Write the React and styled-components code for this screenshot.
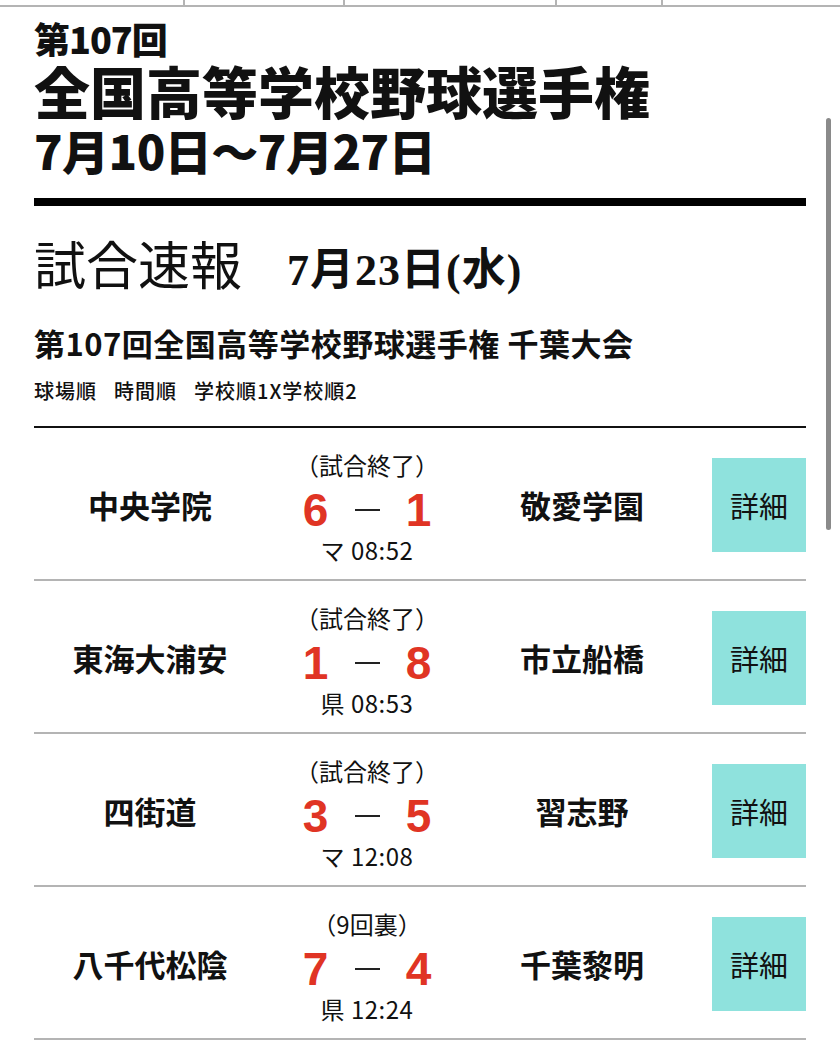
import styled, { createGlobalStyle } from 'styled-components';

const GlobalStyle = createGlobalStyle`
  html, body {
    margin: 0;
    padding: 0;
    background: #fff;
  }
  body {
    font-family: "Noto Sans CJK JP", "Noto Sans", sans-serif;
    color: #111;
    overflow: hidden;
  }
`;

// 上に少しだけ見えている表の下端
const TopStrip = styled.div`
  display: flex;
  height: 5px;
  border-bottom: 2px solid #b4b4b4;
`;

const TopCell = styled.div`
  width: ${(p) => p.w}px;
  flex: ${(p) => (p.grow ? 1 : 'none')};
  border-right: ${(p) => (p.grow ? 'none' : '2px solid #b4b4b4')};
`;

const Page = styled.div`
  padding: 0 34px;
`;

const Kai = styled.div`
  margin-top: 13px;
  font-size: 36px;
  line-height: 36px;
  font-weight: 900;
  letter-spacing: -1px;
`;

const Title = styled.h1`
  margin: 6px 0 0;
  font-size: 56px;
  line-height: 56px;
  font-weight: 900;
`;

const Period = styled.div`
  margin-top: 8px;
  font-size: 47px;
  line-height: 48px;
  font-weight: 900;
  letter-spacing: -0.5px;
`;

const Bar = styled.div`
  margin-top: 24px;
  height: 8px;
  background: #000;
`;

const Heading = styled.h2`
  margin: 34px 0 0;
  display: flex;
  align-items: baseline;
  gap: 45px;
  font-family: "Liberation Serif", "Noto Sans CJK JP", serif;
  font-weight: 400;
  font-size: 52px;
  line-height: 56px;
`;

const HeadDate = styled.span`
  font-size: 44px;
  font-weight: 700;
  letter-spacing: 1px;
`;

const Tournament = styled.div`
  margin-top: 26px;
  font-size: 31px;
  line-height: 36px;
  font-weight: 700;
  letter-spacing: 0.5px;
`;

const SortBar = styled.div`
  margin-top: 18px;
  display: flex;
  gap: 17px;
  font-size: 20px;
  line-height: 24px;
  font-weight: 500;
  letter-spacing: 1px;
`;

const SortLink = styled.span`
  color: #111;
`;

const Rule = styled.div`
  margin-top: 23px;
  height: 2px;
  background: #111;
`;

const GameRow = styled.div`
  display: grid;
  grid-template-columns: 232px 202px 228px 1fr 94px;
  align-items: center;
  padding: 30px 0 27px;
  border-bottom: 2px solid #b4b4b4;
`;

const Team = styled.div`
  text-align: center;
  font-size: 31px;
  font-weight: 700;
  line-height: 40px;
`;

const Center = styled.div`
  height: 94px;
  padding-top: 5px;
  box-sizing: border-box;
  display: flex;
  flex-direction: column;
  align-items: center;
  justify-content: center;
`;

const Status = styled.div`
  flex: none;
  font-size: 24px;
  line-height: 28px;
  font-weight: 400;
`;

const Score = styled.div`
  flex: none;
  display: flex;
  align-items: center;
  gap: 26px;
  height: 40px;
  margin: 11px 0 6px;
`;

const Digit = styled.span`
  font-family: "Liberation Sans", Arial, sans-serif;
  font-weight: 700;
  font-size: 46px;
  line-height: 40px;
  color: #e03424;
  width: 26px;
  text-align: center;
`;

const Dash = styled.span`
  display: block;
  width: 25px;
  height: 2px;
  background: #222;
`;

const Venue = styled.div`
  flex: none;
  font-size: 24px;
  line-height: 28px;
  font-weight: 400;
  letter-spacing: 0.5px;
`;

const DetailButton = styled.button`
  grid-column: 5;
  width: 94px;
  height: 94px;
  border: none;
  background: #8fe2dd;
  font-family: "Noto Sans CJK JP", sans-serif;
  font-size: 29px;
  font-weight: 400;
  color: #111;
  padding: 0;
`;

const ScrollThumb = styled.div`
  position: fixed;
  right: 9px;
  top: 118px;
  width: 5px;
  height: 412px;
  border-radius: 3px;
  background: #8a8a8a;
`;

const games = [
  { home: '中央学院', away: '敬愛学園', hs: 6, as: 1, status: '（試合終了）', venue: 'マ 08:52' },
  { home: '東海大浦安', away: '市立船橋', hs: 1, as: 8, status: '（試合終了）', venue: '県 08:53' },
  { home: '四街道', away: '習志野', hs: 3, as: 5, status: '（試合終了）', venue: 'マ 12:08' },
  { home: '八千代松陰', away: '千葉黎明', hs: 7, as: 4, status: '（9回裏）', venue: '県 12:24' },
];

export default function App() {
  return (
    <>
      <GlobalStyle />
      <TopStrip>
        <TopCell w={183} />
        <TopCell w={158} />
        <TopCell w={210} />
        <TopCell w={104} />
        <TopCell grow />
      </TopStrip>
      <Page>
        <Kai>第107回</Kai>
        <Title>全国高等学校野球選手権</Title>
        <Period>7月10日〜7月27日</Period>
        <Bar />
        <Heading>
          <span>試合速報</span>
          <HeadDate>7月23日(水)</HeadDate>
        </Heading>
        <Tournament>第107回全国高等学校野球選手権 千葉大会</Tournament>
        <SortBar>
          <SortLink>球場順</SortLink>
          <SortLink>時間順</SortLink>
          <SortLink>学校順1X学校順2</SortLink>
        </SortBar>
        <Rule />
        {games.map((g) => (
          <GameRow key={g.home}>
            <Team>{g.home}</Team>
            <Center>
              <Status>{g.status}</Status>
              <Score>
                <Digit>{g.hs}</Digit>
                <Dash />
                <Digit>{g.as}</Digit>
              </Score>
              <Venue>{g.venue}</Venue>
            </Center>
            <Team>{g.away}</Team>
            <DetailButton>詳細</DetailButton>
          </GameRow>
        ))}
      </Page>
      <ScrollThumb />
    </>
  );
}
